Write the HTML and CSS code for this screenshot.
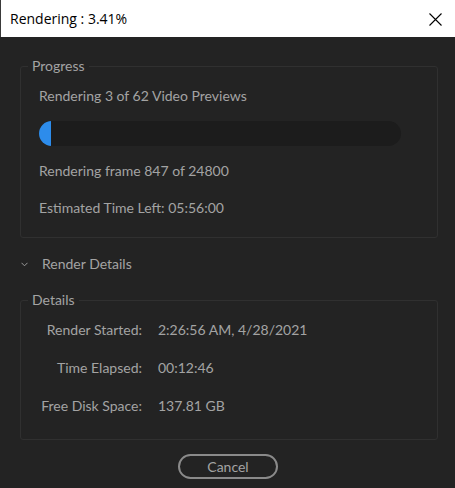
FILE: index.html
```html
<!DOCTYPE html>
<html>
<head>
<meta charset="utf-8">
<link rel="stylesheet" href="styles.css">
</head>
<body>
<div class="window">
  <div class="titlebar">
    <span class="title">Rendering : 3.41%</span>
    <svg class="close" width="13" height="13" viewBox="0 0 13 13"><path d="M0.5 0.5 L12.5 12.5 M12.5 0.5 L0.5 12.5" stroke="#000" stroke-width="1.1" fill="none"/></svg>
  </div>
  <div class="content">
    <fieldset class="group progress">
      <legend>Progress</legend>
      <div class="group-body">
        <div class="line first">Rendering 3 of 62 Video Previews</div>
        <div class="bar"><div class="bar-fill" style="width:12px"></div></div>
        <div class="line frame">Rendering frame 847 of 24800</div>
        <div class="line eta">Estimated Time Left: 05:56:00</div>
      </div>
    </fieldset>
    <div class="disclosure">
      <svg class="chevron" width="7" height="5" viewBox="0 0 7 5"><polyline points="0.5,0.8 3.5,3.8 6.5,0.8" stroke="#9a9a9a" stroke-width="1" fill="none"/></svg>
      <span>Render Details</span>
    </div>
    <fieldset class="group details">
      <legend>Details</legend>
      <div class="rows">
        <span class="label">Render Started:</span><span class="value">2:26:56 AM, 4/28/2021</span>
        <span class="label">Time Elapsed:</span><span class="value">00:12:46</span>
        <span class="label">Free Disk Space:</span><span class="value">137.81 GB</span>
      </div>
    </fieldset>
    <div class="actions">
      <button class="cancel">Cancel</button>
    </div>
  </div>
</div>
</body>
</html>
```

FILE: styles.css
```css
html, body {
  margin: 0;
  padding: 0;
  background: #232323;
}
.window {
  width: 455px;
  height: 488px;
  background: #232323;
  font-family: "Lato", "Open Sans", sans-serif;
  color: #a3a3a3;
  font-size: 14px;
}
.titlebar {
  height: 37px;
  background: #fff;
  display: flex;
  align-items: center;
  justify-content: space-between;
  padding: 0 13px 0 10px;
  box-sizing: border-box;
  border-left: 1px solid #3a3a3a;
}
.title {
  font-family: "Open Sans", "Noto Sans", sans-serif;
  font-size: 14px;
  color: #000;
  margin-left: -1px;
}
.close {
  display: block;
  margin-top: 1px;
}
.content {
  padding: 0 17px 0 20px;
}
.group {
  margin: 0;
  border: 1px solid #303030;
  border-radius: 3px;
  padding: 0;
  min-width: 0;
}
.group legend {
  margin-left: 7px;
  padding: 0 4px;
  line-height: 20px;
  font-size: 14px;
  color: #a3a3a3;
}
.progress {
  margin-top: 19px;
}
.group-body {
  padding: 10px 0 19px 18px;
}
.line {
  line-height: 20px;
  height: 20px;
  white-space: nowrap;
}
.bar {
  margin-top: 15px;
  width: 362px;
  height: 25px;
  border-radius: 12.5px;
  background: #1c1c1c;
  overflow: hidden;
}
.bar-fill {
  height: 100%;
  background: #2d8ceb;
}
.frame {
  margin-top: 15px;
}
.eta {
  margin-top: 17px;
}
.disclosure {
  margin-top: 16px;
  height: 20px;
  line-height: 20px;
  display: flex;
  align-items: center;
}
.chevron {
  display: block;
  margin-left: 1px;
  margin-right: 14px;
}
.details {
  margin-top: 16px;
}
.rows {
  display: grid;
  grid-template-columns: 121px auto;
  column-gap: 16px;
  row-gap: 18px;
  padding: 10px 0 23px 0;
  line-height: 20px;
}
.label {
  text-align: right;
  white-space: nowrap;
}
.value {
  white-space: nowrap;
}
.actions {
  display: flex;
  justify-content: center;
  margin-top: 14px;
  padding-right: 2px;
}
.cancel {
  width: 100px;
  height: 25px;
  box-sizing: border-box;
  border: 2px solid #8a8a8a;
  border-radius: 13px;
  background: transparent;
  color: #a3a3a3;
  font-family: "Lato", "Open Sans", sans-serif;
  font-size: 14px;
  padding: 0;
  line-height: 20px;
}
```
